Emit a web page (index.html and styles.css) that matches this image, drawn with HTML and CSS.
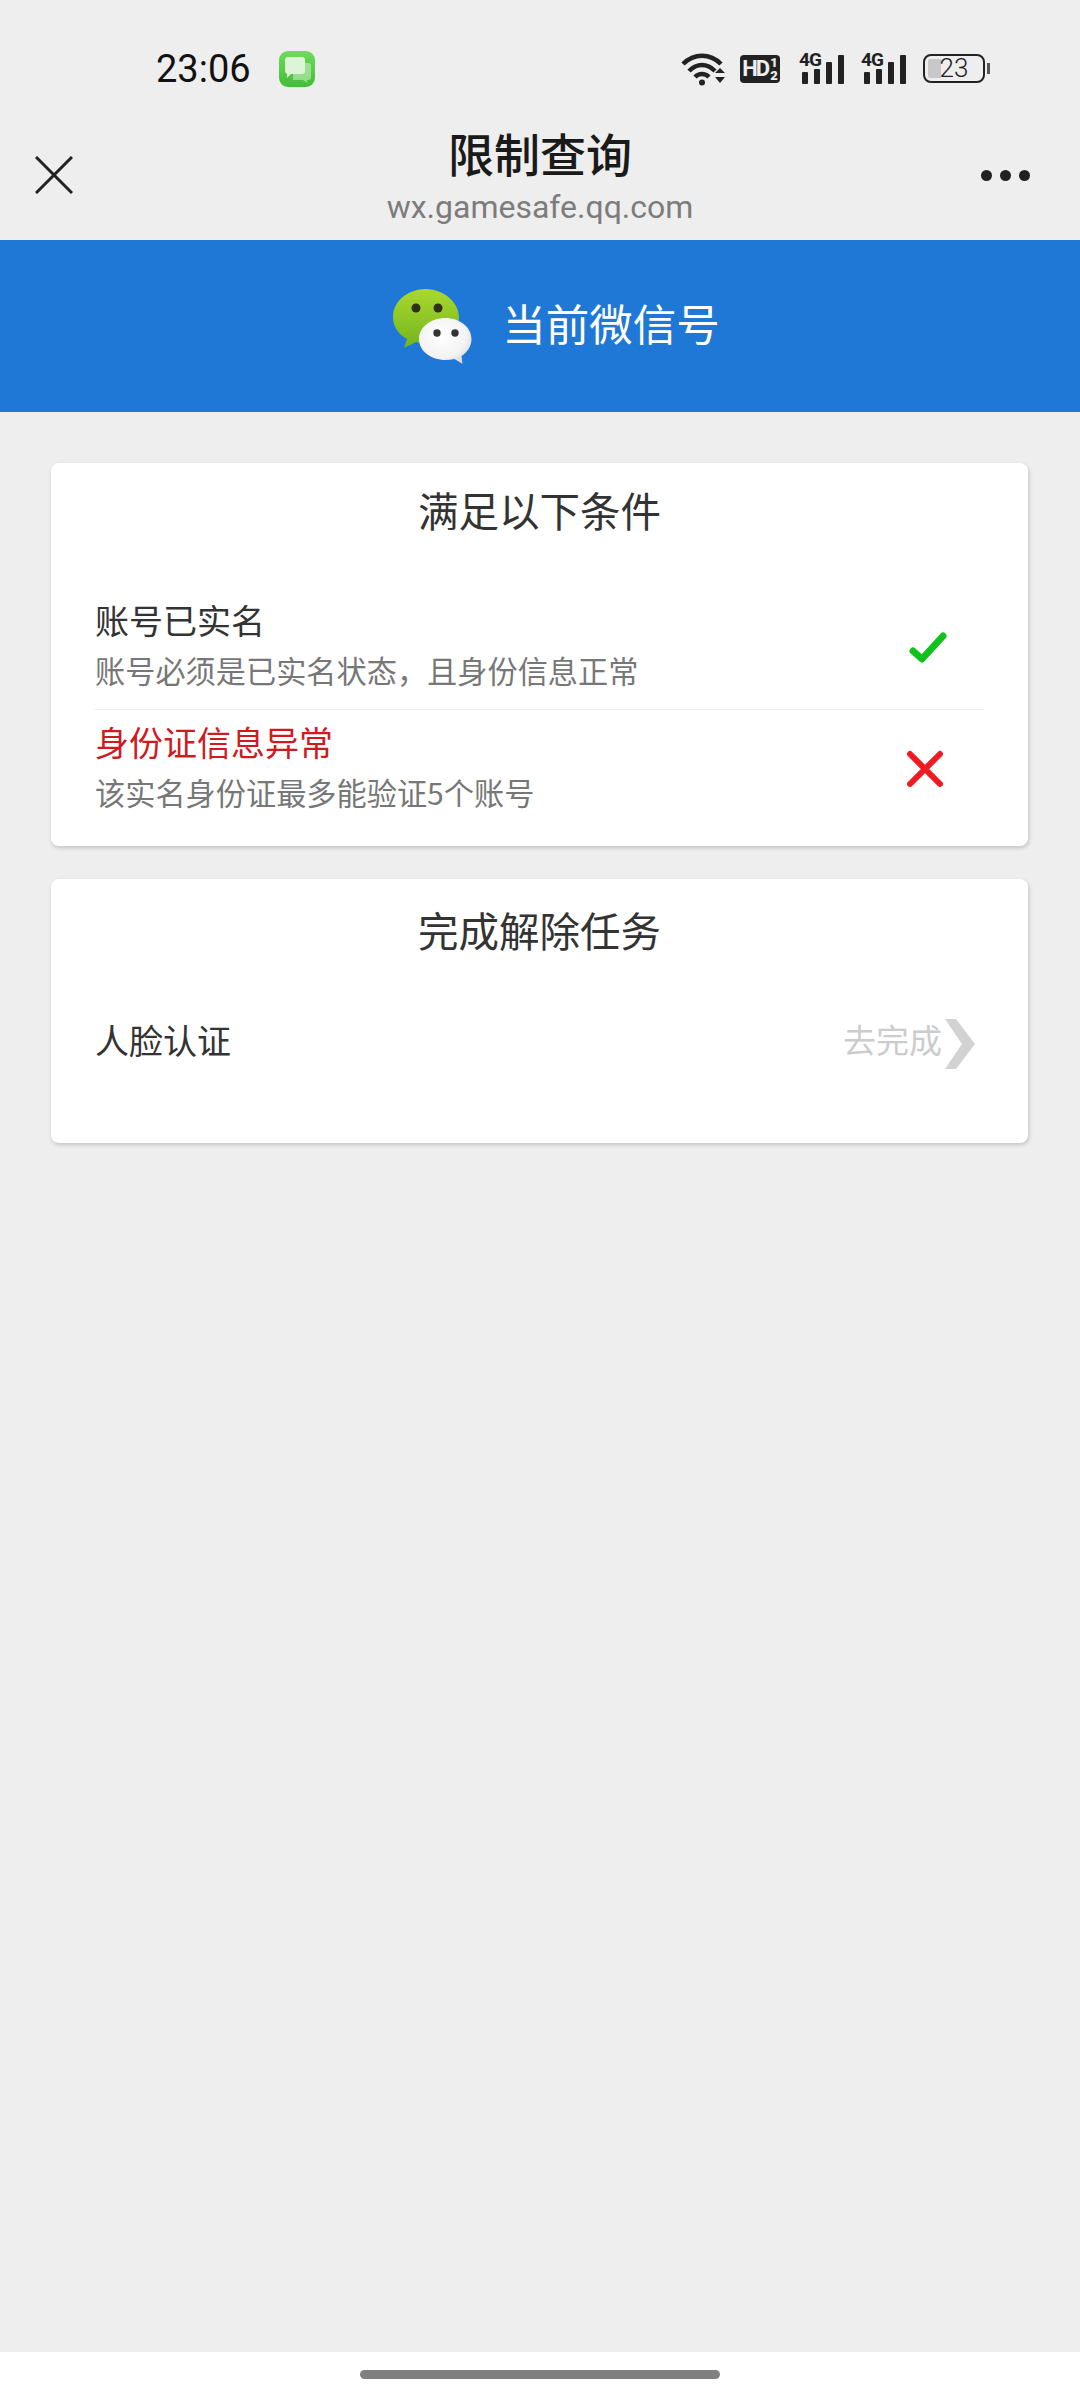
FILE: index.html
```html
<!DOCTYPE html>
<html lang="zh">
<head>
    <meta charset="UTF-8">
    <title>限制查询</title>

    <link rel="stylesheet" href="styles.css">

</head>
<body>

    <div id="page">

        <div id="status-bar">
            <span class="clock">23:06</span>
            <svg class="msg-icon" width="36" height="36" viewBox="0 0 36 36">
                <defs>
                    <linearGradient id="msg-bg" x1="0" y1="0" x2="0" y2="1">
                        <stop offset="0" stop-color="#6fdc5a"/>
                        <stop offset="1" stop-color="#43bd38"/>
                    </linearGradient>
                </defs>
                <rect width="36" height="36" rx="9" fill="url(#msg-bg)"/>
                <path d="M14 12h15a3 3 0 0 1 3 3v11a3 3 0 0 1-3 3h-1v3l-4-3h-10z" fill="#fff" opacity=".4"/>
                <path d="M9 6h14a3 3 0 0 1 3 3v11a3 3 0 0 1-3 3H12l-4 4v-4.200A3 3 0 0 1 6 20V9a3 3 0 0 1 3-3z" fill="#def4d6"/>
            </svg>
            <div class="status-right">
                <svg class="wifi" width="46" height="34" viewBox="0 0 46 34">
                    <g fill="none" stroke="#222" stroke-width="4.500">
                        <path d="M2 12C13 1 29 1 40 12"/>
                        <path d="M8 19C16 11 26 11 34 19"/>
                        <path d="M14 25C18 21 24 21 28 25"/>
                    </g>
                    <circle cx="21" cy="30.500" r="3" fill="#222"/>
                    <path d="M34 21l5-5 5 5zM34 25l5 6 5-6z" fill="#222"/>
                </svg>
                <div class="hd-badge">HD<span class="hd-sims"><b>1</b><b>2</b></span></div>
                <div class="signal">
                    <span class="net">4G</span>
                    <i class="s1"></i><i class="s2"></i><i class="s3"></i><i class="s4"></i>
                </div>
                <div class="signal">
                    <span class="net">4G</span>
                    <i class="s1"></i><i class="s2"></i><i class="s3"></i><i class="s4"></i>
                </div>
                <div class="battery">
                    <div class="battery-body">
                        <span class="battery-fill"></span>
                        <span class="battery-num">23</span>
                    </div>
                    <span class="battery-tip"></span>
                </div>
            </div>
        </div>

        <div id="nav-bar">
            <svg class="nav-close" width="38" height="38" viewBox="0 0 38 38">
                <path d="M1 1L37 37M37 1L1 37" stroke="#222" stroke-width="3" fill="none"/>
            </svg>
            <div class="nav-title">
                <h1>限制查询</h1>
                <p>wx.gamesafe.qq.com</p>
            </div>
            <div class="nav-more"><i></i><i></i><i></i></div>
        </div>

        <div id="banner">
            <svg class="wx-logo" width="80" height="75" viewBox="0 0 80 75">
                <defs>
                    <linearGradient id="wx-green" x1="0" y1="0" x2="0" y2="1">
                        <stop offset="0" stop-color="#a9d92e"/>
                        <stop offset="1" stop-color="#74b41e"/>
                    </linearGradient>
                    <radialGradient id="wx-white" cx=".45" cy=".4" r=".7">
                        <stop offset="0" stop-color="#ffffff"/>
                        <stop offset=".65" stop-color="#f3f3f3"/>
                        <stop offset="1" stop-color="#cfcfcf"/>
                    </radialGradient>
                </defs>
                <path d="M33 0C15 0 0 12 0 28c0 9 5 17 14 22l-3 9 12-6c3 .8 6 1 10 1 18 0 33-12 33-26S51 0 33 0z" fill="url(#wx-green)"/>
                <circle cx="23" cy="19" r="4.500" fill="#2f2f1c"/>
                <circle cx="45" cy="19" r="4.500" fill="#2f2f1c"/>
                <path d="M52.500 29C38 29 26 38 26 50s12 21 26.500 21c3 0 6-.3 9-1l8 5-1-8c6-4 10-10 10-17 0-12-12-21-26.500-21z" fill="url(#wx-white)"/>
                <circle cx="44" cy="44" r="3.700" fill="#333"/>
                <circle cx="62" cy="44" r="3.700" fill="#333"/>
            </svg>
            <span class="banner-text">当前微信号</span>
        </div>

        <div id="content">
            <div class="card">
                <h2 class="card-title">满足以下条件</h2>
                <div class="cond-list">
                    <div class="cond-row">
                        <div class="cond-text">
                            <h3>账号已实名</h3>
                            <p>账号必须是已实名状态，且身份信息正常</p>
                        </div>
                        <svg class="cond-icon" width="44" height="40" viewBox="0 0 44 40">
                            <path d="M10 24L19 32L40 9" stroke="#10c21c" stroke-width="7" stroke-linecap="round" stroke-linejoin="round" fill="none"/>
                        </svg>
                    </div>
                    <div class="cond-row">
                        <div class="cond-text">
                            <h3 class="fail">身份证信息异常</h3>
                            <p>该实名身份证最多能验证5个账号</p>
                        </div>
                        <svg class="cond-icon" width="44" height="40" viewBox="0 0 44 40">
                            <path d="M7 5L37 35M37 5L7 35" stroke="#ef1a22" stroke-width="6" stroke-linecap="round" fill="none"/>
                        </svg>
                    </div>
                </div>
            </div>

            <div class="card card-task">
                <h2 class="card-title">完成解除任务</h2>
                <div class="task-row">
                    <span class="task-name">人脸认证</span>
                    <span class="task-go">去完成</span>
                    <svg class="task-arrow" width="32" height="50" viewBox="0 0 32 50">
                        <path d="M1 0H12L31 25L12 50H1L18 25z" fill="#d2d2d2"/>
                    </svg>
                </div>
            </div>
        </div>

        <div id="home-bar"><span></span></div>

    </div>

</body>
</html>
```

FILE: styles.css
```css
* {
    box-sizing: border-box;
}
body {
    margin: 0;
    background-color: #eeeeee;
    font-family: 'Noto Sans CJK SC', 'Liberation Sans', sans-serif;
    color: #333;
}
h1, h2, h3, p {
    margin: 0;
    font-weight: normal;
}
#page {
    display: flex;
    flex-direction: column;
    height: 2400px;
}

/* status bar */
#status-bar {
    display: flex;
    align-items: center;
    height: 110px;
    padding: 27px 90px 0 156px;
    flex: none;
}
.clock {
    font-family: Roboto, sans-serif;
    font-size: 38px;
    color: #111;
    width: 123px;
}
.status-right {
    display: flex;
    align-items: center;
    margin-left: auto;
}
.wifi {
    margin-right: 13px;
}
.hd-badge {
    display: flex;
    align-items: center;
    justify-content: center;
    width: 40px;
    height: 28px;
    margin-right: 19px;
    background-color: #222;
    border-radius: 4px;
    color: #eee;
    font: bold 22px/28px Roboto, sans-serif;
    letter-spacing: -2px;
}
.hd-sims {
    display: flex;
    flex-direction: column;
    margin-left: 2px;
    font-size: 13px;
    line-height: 13px;
    letter-spacing: 0;
}
.signal {
    position: relative;
    display: flex;
    align-items: flex-end;
    gap: 6px;
    width: 46px;
    height: 30px;
    margin-right: 16px;
    padding-left: 3px;
}
.signal i {
    display: block;
    width: 6px;
    background-color: #222;
    border-radius: 1px;
}
.s1 { height: 12px; }
.s2 { height: 15px; }
.s3 { height: 22px; }
.s4 { height: 29px; }
.net {
    position: absolute;
    left: 0;
    top: -4px;
    font: bold 19px/20px Roboto, sans-serif;
    letter-spacing: -1px;
    color: #222;
}
.battery {
    display: flex;
    align-items: center;
    gap: 2px;
}
.battery-body {
    position: relative;
    width: 62px;
    height: 29px;
    border: 2px solid #222;
    border-radius: 8px;
    text-align: center;
    font: 300 26px/25px Roboto, sans-serif;
    color: #222;
}
.battery-fill {
    position: absolute;
    left: 3px;
    top: 3px;
    bottom: 3px;
    width: 13px;
    background-color: #c8c8c8;
    border-radius: 2px 0 0 2px;
}
.battery-num {
    position: relative;
}
.battery-tip {
    width: 3px;
    height: 11px;
    background-color: #555;
}

/* nav bar */
#nav-bar {
    display: flex;
    align-items: center;
    justify-content: space-between;
    height: 130px;
    padding: 0 50px 0 35px;
    position: relative;
    flex: none;
}
.nav-title {
    position: absolute;
    left: 0;
    right: 0;
    top: 0;
    text-align: center;
}
.nav-title h1 {
    font-size: 46px;
    line-height: 60px;
    margin-top: 12px;
    color: #1a1a1a;
    font-weight: 500;
}
.nav-title p {
    font-family: Roboto, sans-serif;
    font-size: 32px;
    line-height: 40px;
    margin-top: 5px;
    color: #7c7c7c;
}
.nav-more {
    display: flex;
    gap: 8px;
}
.nav-more i {
    display: block;
    width: 11px;
    height: 11px;
    border-radius: 50%;
    background-color: #222;
}

/* blue banner */
#banner {
    display: flex;
    align-items: center;
    justify-content: center;
    gap: 29px;
    height: 172px;
    padding-left: 33px;
    background-color: #1f78d6;
    flex: none;
}
.banner-text {
    font-size: 43.500px;
    color: #fff;
    margin-top: -8px;
}

/* cards */
#content {
    flex: 1;
    padding: 51px 52px 0 51px;
}
.card {
    background-color: #fff;
    border-radius: 8px;
    box-shadow: 1px 2px 4px rgba(0,0,0,.18);
    padding: 0 44px 17px;
}
.card-title {
    font-size: 40.5px;
    line-height: 94px;
    text-align: center;
    color: #333;
}
.cond-list {
    margin-top: 33px;
}
.cond-row {
    display: flex;
    align-items: center;
    justify-content: space-between;
    height: 119px;
    padding: 5px 37px 14px 0;
}
.cond-row + .cond-row {
    border-top: 1px solid #eeeeee;
    height: 120px;
    padding: 7px 37px 12px 0;
}
.cond-icon {
    margin-top: 4px;
}
.cond-text h3 {
    font-size: 34px;
    line-height: 50px;
    color: #333;
}
.cond-text h3.fail {
    color: #cf1b1f;
}
.cond-text p {
    font-size: 30.200px;
    line-height: 50px;
    color: #777;
}
.card-task {
    margin-top: 33px;
    height: 264px;
    padding-top: 4px;
}
.task-row {
    display: flex;
    align-items: center;
    margin-top: 37px;
    padding-right: 8px;
    height: 50px;
}
.task-name {
    font-size: 34px;
    color: #333;
    margin-right: auto;
}
.task-go {
    font-size: 33px;
    color: #cccccc;
    margin-right: 2px;
}
.task-arrow {
    margin-top: 10px;
}

/* home indicator */
#home-bar {
    display: flex;
    justify-content: center;
    height: 48px;
    padding-top: 18px;
    background-color: #fff;
    flex: none;
}
#home-bar span {
    display: block;
    width: 360px;
    height: 9px;
    border-radius: 5px;
    background-color: #7f7f7f;
}
```
